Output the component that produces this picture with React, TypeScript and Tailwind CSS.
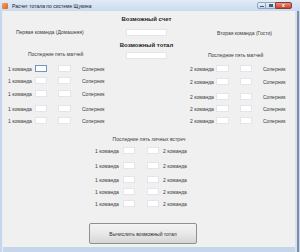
import React from "react";

const leftGaps = ["mt-[8px]", "mt-[5px]", "mt-[6px]", "mt-[8px]", "mt-[5px]"];
const rightGaps = ["mt-[7px]", "mt-[6px]", "mt-[8px]", "mt-[5px]", "mt-[5px]"];
const h2hGaps = ["mt-[5px]", "mt-[8px]", "mt-[7px]", "mt-[5px]", "mt-[5px]"];

const Box = ({ w, focused }: { w: string; focused?: boolean }) => (
  <div
    className={`h-[7px] ${w} shrink-0 bg-white border ${
      focused ? "border-[#6f97c0]" : "border-[#e2e6ea]"
    }`}
  />
);

const Label = ({ children, className = "" }: { children: React.ReactNode; className?: string }) => (
  <span className={`block whitespace-nowrap text-[5px] leading-[6px] text-[#3a3a3a] ${className}`}>
    {children}
  </span>
);

export default function App() {
  return (
    <div
      className="flex h-[252px] w-[300px] flex-col bg-[#c5d6eb]"
      style={{ fontFamily: '"Liberation Sans", Arial, sans-serif' }}
    >
      {/* title bar */}
      <div className="flex h-[11px] items-center bg-gradient-to-b from-[#e1ebf6] to-[#cadbef]">
        <div className="ml-[2px] h-[6px] w-[6px] rounded-[1px] bg-gradient-to-br from-[#f6a45a] to-[#d9661c]" />
        <span className="ml-[4px] whitespace-nowrap text-[5px] leading-[6px] text-[#222]">
          Расчет тотала по системе Щукина
        </span>
        <div className="ml-auto mr-[8px] mt-[2px] flex h-[7px] self-start">
          <div className="flex h-full w-[9px] items-end justify-center rounded-l-[2px] border border-[#8ea4bf] bg-gradient-to-b from-[#e9f0f8] to-[#c3d3e6] pb-[1px]">
            <div className="h-[1px] w-[4px] bg-[#4a5a70]" />
          </div>
          <div className="flex h-full w-[9px] items-center justify-center border-y border-[#8ea4bf] bg-gradient-to-b from-[#e9f0f8] to-[#c3d3e6]">
            <div className="h-[3px] w-[4px] border border-t-2 border-[#4a5a70]" />
          </div>
          <div className="flex h-full w-[17px] items-center justify-center rounded-r-[2px] border border-[#8b3a33] bg-gradient-to-b from-[#e8907f] to-[#c8402c] text-[5px] font-bold leading-none text-white">
            x
          </div>
        </div>
      </div>

      {/* client area */}
      <div className="flex flex-1">
        <div className="w-[3px] border-r border-[#e6eef7]" />
        <div className="flex h-[236px] w-[292px] flex-col bg-[#f0f0f0]">
          <div className="flex items-start">
            {/* left column */}
            <div className="flex w-[105px] flex-col pt-[18px]">
              <Label className="pl-[13px]">Первая команда (Домашняя)</Label>
              <Label className="mt-[16px] pl-[25px]">Последние пять матчей</Label>
              {leftGaps.map((g, i) => (
                <div key={i} className={`flex h-[7px] items-center ${g}`}>
                  <Label className="ml-[5px] w-[27px]">1 команда</Label>
                  <Box w="w-[12px]" focused={i === 0} />
                  <div className="ml-[11px]">
                    <Box w="w-[13px]" />
                  </div>
                  <Label className="ml-[11px]">Соперник</Label>
                </div>
              ))}
            </div>

            {/* center column */}
            <div className="flex w-[77px] flex-col items-center pt-[4px]">
              <span className="block whitespace-nowrap text-[6px] font-bold leading-[8px] text-[#1e1e1e]">
                Возможный счет
              </span>
              <div className="mt-[6px]">
                <Box w="w-[41px]" />
              </div>
              <span className="mt-[5px] block whitespace-nowrap text-[6px] font-bold leading-[8px] text-[#1e1e1e]">
                Возможный тотал
              </span>
              <div className="mt-[3px]">
                <Box w="w-[41px]" />
              </div>
            </div>

            {/* right column */}
            <div className="flex w-[110px] flex-col pt-[19px]">
              <Label className="pl-[32px]">Вторая команда (Гости)</Label>
              <Label className="mt-[16px] pl-[23px]">Последние пять матчей</Label>
              {rightGaps.map((g, i) => (
                <div key={i} className={`flex h-[7px] items-center ${g}`}>
                  <Label className="ml-[5px] w-[26px]">2 команда</Label>
                  <Box w="w-[13px]" />
                  <div className="ml-[11px]">
                    <Box w="w-[12px]" />
                  </div>
                  <Label className="ml-[11px]">Соперник</Label>
                </div>
              ))}
            </div>
          </div>

          {/* head to head */}
          <Label className="mt-[12px] text-center">Последние пять личных встреч</Label>
          {h2hGaps.map((g, i) => (
            <div key={i} className={`flex h-[7px] items-center pl-[92px] ${g}`}>
              <Label className="w-[28px]">1 команда</Label>
              <Box w="w-[12px]" />
              <div className="ml-[12px]">
                <Box w="w-[12px]" />
              </div>
              <Label className="ml-[4px]">2 команда</Label>
            </div>
          ))}

          <button className="ml-[86px] mt-[16px] flex h-[21px] w-[108px] items-center justify-center rounded-[2px] border border-[#8f8f8f] bg-gradient-to-b from-[#f4f4f4] via-[#e8e8e8] to-[#d6d6d6] text-[5px] leading-[6px] text-[#2a2a2a]">
            Вычислить возможный тотал
          </button>
        </div>
        <div className="flex w-[5px]">
          <div className="w-[2px] bg-[#d6e2f0]" />
          <div className="w-[2px] bg-[#7d8ea6]" />
          <div className="w-[1px] bg-[#c5d6eb]" />
        </div>
      </div>
    </div>
  );
}
